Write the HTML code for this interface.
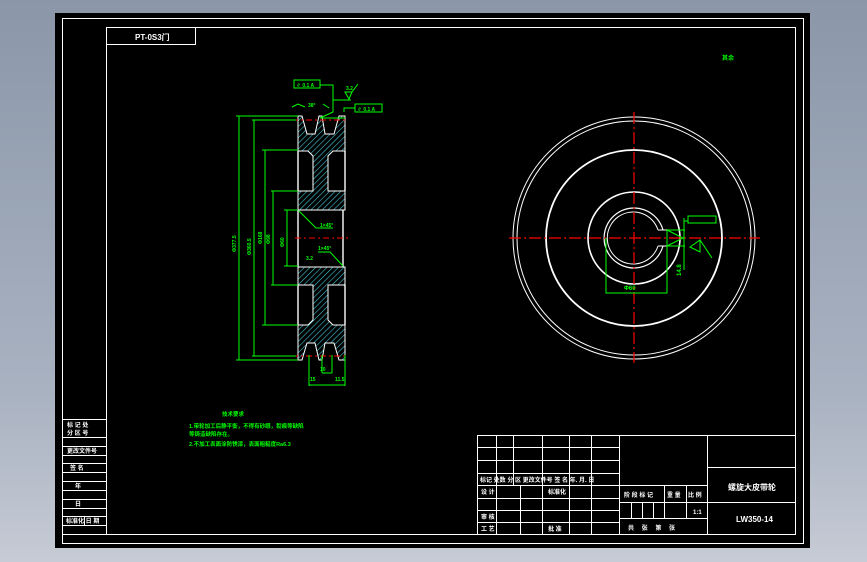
<!DOCTYPE html>
<html><head><meta charset="utf-8"><style>
html,body{margin:0;padding:0;width:867px;height:562px;overflow:hidden;background:linear-gradient(#8b97a9,#a9b2c1 70%,#c6cbd5);}
svg{position:absolute;left:0;top:0}
text{font-family:"Liberation Sans","Noto Sans CJK SC",sans-serif;font-weight:bold}
</style></head><body>
<svg width="867" height="562" viewBox="0 0 867 562">
<defs>
<pattern id="h" width="4" height="4" patternUnits="userSpaceOnUse" patternTransform="rotate(45)">
<rect width="4" height="4" fill="#000"/><line x1="0" y1="0" x2="0" y2="4" stroke="#46d0e0" stroke-width="1.1"/>
</pattern>
</defs>
<rect x="55" y="13" width="755" height="535" fill="#000"/>
<g fill="none" stroke="#fff" stroke-width="1">
<rect x="62.5" y="18.5" width="741" height="525"/>
<polyline points="106.5,534.5 106.5,27.5 795.5,27.5 795.5,534.5 62.5,534.5"/>
<rect x="106.5" y="27.5" width="89" height="17"/>
<line x1="62" y1="419.5" x2="106" y2="419.5"/>
<line x1="62" y1="437.5" x2="106" y2="437.5"/>
<line x1="62" y1="446.5" x2="106" y2="446.5"/>
<line x1="62" y1="455.5" x2="106" y2="455.5"/>
<line x1="62" y1="463.5" x2="106" y2="463.5"/>
<line x1="62" y1="472.5" x2="106" y2="472.5"/>
<line x1="62" y1="481.5" x2="106" y2="481.5"/>
<line x1="62" y1="490.5" x2="106" y2="490.5"/>
<line x1="62" y1="499.5" x2="106" y2="499.5"/>
<line x1="62" y1="508.5" x2="106" y2="508.5"/>
<line x1="62" y1="516.5" x2="106" y2="516.5"/>
<line x1="62" y1="525.5" x2="106" y2="525.5"/>
<line x1="84.5" y1="516" x2="84.5" y2="525"/>
<line x1="477.5" y1="435.5" x2="795" y2="435.5"/>
<line x1="477.5" y1="435" x2="477.5" y2="534"/>
<line x1="477" y1="447.5" x2="619" y2="447.5"/>
<line x1="477" y1="460.5" x2="619" y2="460.5"/>
<line x1="477" y1="473.5" x2="619" y2="473.5"/>
<line x1="477" y1="485.5" x2="707" y2="485.5"/>
<line x1="477" y1="498.5" x2="619" y2="498.5"/>
<line x1="477" y1="510.5" x2="619" y2="510.5"/>
<line x1="477" y1="522.5" x2="619" y2="522.5"/>
<line x1="619" y1="502.5" x2="707" y2="502.5"/>
<line x1="619" y1="518.5" x2="707" y2="518.5"/>
<line x1="707" y1="467.5" x2="795" y2="467.5"/>
<line x1="707" y1="502.5" x2="795" y2="502.5"/>
<line x1="496.5" y1="435" x2="496.5" y2="534"/>
<line x1="513.5" y1="435" x2="513.5" y2="485"/>
<line x1="520.5" y1="485" x2="520.5" y2="534"/>
<line x1="542.5" y1="435" x2="542.5" y2="534"/>
<line x1="569.5" y1="435" x2="569.5" y2="534"/>
<line x1="591.5" y1="435" x2="591.5" y2="534"/>
<line x1="619.5" y1="435" x2="619.5" y2="534"/>
<line x1="707.5" y1="435" x2="707.5" y2="534"/>
<line x1="631.5" y1="502" x2="631.5" y2="518"/>
<line x1="642.5" y1="502" x2="642.5" y2="518"/>
<line x1="653.5" y1="502" x2="653.5" y2="518"/>
<line x1="664.5" y1="485" x2="664.5" y2="518"/>
<line x1="686.5" y1="485" x2="686.5" y2="518"/>
</g>
<g fill="#fff" font-size="6">
<text x="135" y="40" font-size="8">PT-0S3门</text>
<text x="67" y="427">标 记 处</text><text x="67" y="435">分 区 号</text>
<text x="67" y="453">更改文件号</text>
<text x="70" y="470">签 名</text>
<text x="75" y="488">年</text>
<text x="75" y="506">日</text>
<text x="66" y="523">标准化 日 期</text>
<text x="480" y="482">标记 处数 分 区 更改文件号 签 名 年. 月. 日</text>
<text x="481" y="494">设 计</text><text x="548" y="494">标准化</text>
<text x="481" y="519">审 核</text>
<text x="481" y="531">工 艺</text><text x="548" y="531">批 准</text>
<text x="624" y="497">阶 段 标 记</text><text x="667" y="497">重 量</text><text x="688" y="497">比 例</text>
<text x="693" y="514">1:1</text>
<text x="628" y="530">共　 张　 第　 张</text>
<text x="728" y="490" font-size="8">螺旋大皮带轮</text>
<text x="736" y="522" font-size="8">LW350-14</text>
</g>
<g fill="none" stroke="#fff">
<circle cx="634" cy="238" r="121" stroke-width="1"/>
<circle cx="634" cy="238" r="117" stroke-width="1"/>
<circle cx="634" cy="238" r="88" stroke-width="1.8"/>
<circle cx="634" cy="238" r="46" stroke-width="1.6"/>
<path d="M663,230 A30,30 0 1 0 663,246" stroke-width="1.2"/>
<path d="M658,230 A26,26 0 1 0 658,246" stroke-width="1"/>
<line x1="658" y1="230" x2="667" y2="230"/><line x1="658" y1="246" x2="667" y2="246"/>
</g>
<g stroke="#f00" stroke-width="1.2" stroke-dasharray="12,3,2,3">
<line x1="509" y1="238" x2="760" y2="238"/>
<line x1="634" y1="112" x2="634" y2="363"/>
</g>
<g stroke="#0f0" fill="none" stroke-width="1">
<polyline points="606,238 606,293 667,293 667,229"/>
<line x1="667" y1="230" x2="685" y2="230"/>
<line x1="667" y1="246" x2="685" y2="246"/>
<line x1="684" y1="218" x2="684" y2="270"/>
<path d="M667,230 L683,238 L667,246"/>
<path d="M690,247 L700,240 L700,252 Z M700,240 L712,258"/>
<rect x="688" y="216" width="28" height="7"/>
<line x1="684" y1="221" x2="688" y2="221"/>
</g>
<g fill="#0f0" font-size="6">
<text x="624" y="290">Φ60</text>
<text x="681" y="276" transform="rotate(-90 681 276)">14.8</text>
<text x="722" y="60">其余</text>
</g>
<g>
<path fill="url(#h)" stroke="#fff" stroke-width="1" d="M298,116 L302,116 L307,134 L315,134 L319,116 L322,116 L325,134 L334,134 L339,116 L345,116 L345,151 L333,151 L328,156 L328,191 L345,191 L345,210 L298,210 L298,191 L313,191 L313,156 L308,151 L298,151 Z"/>
<path fill="url(#h)" stroke="#fff" stroke-width="1" d="M298,360 L302,360 L307,343 L315,343 L319,360 L322,360 L325,343 L334,343 L339,360 L345,360 L345,325 L333,325 L328,320 L328,285 L345,285 L345,267 L298,267 L298,285 L313,285 L313,320 L308,325 L298,325 Z"/>
<g fill="none" stroke="#fff" stroke-width="1.4">
<line x1="298" y1="151" x2="298" y2="191"/><line x1="345" y1="151" x2="345" y2="191"/>
<line x1="298" y1="285" x2="298" y2="325"/><line x1="345" y1="285" x2="345" y2="325"/>
<line x1="298" y1="210" x2="298" y2="267"/><line x1="343" y1="210" x2="343" y2="267"/>
</g>
</g>
<g stroke="#f00" stroke-width="1" stroke-dasharray="6,3,2,3">
<line x1="292" y1="120" x2="348" y2="120"/>
<line x1="292" y1="356" x2="348" y2="356"/>
<line x1="295" y1="238" x2="348" y2="238"/>
</g>
<g stroke="#0f0" fill="none" stroke-width="1">
<line x1="239" y1="116" x2="239" y2="360"/><line x1="236" y1="116" x2="298" y2="116"/><line x1="236" y1="360" x2="298" y2="360"/>
<line x1="254" y1="120" x2="254" y2="356"/><line x1="252" y1="120" x2="296" y2="120"/><line x1="252" y1="356" x2="296" y2="356"/>
<line x1="265" y1="150" x2="265" y2="325"/><line x1="262" y1="150" x2="298" y2="150"/><line x1="262" y1="325" x2="298" y2="325"/>
<line x1="273" y1="191" x2="273" y2="285"/><line x1="271" y1="191" x2="298" y2="191"/><line x1="271" y1="285" x2="298" y2="285"/>
<line x1="287" y1="210" x2="287" y2="266"/><line x1="284" y1="210" x2="298" y2="210"/><line x1="284" y1="266" x2="298" y2="266"/>
<path d="M299,211 L316,228 L333,228 M343,266 L330,252 L318,252"/>
<path d="M309,355 L309,386 M345,355 L345,386 M309,385 L345,385 M322,355 L322,373 M332,373 L322,373 M332,355 L332,373"/>
<rect x="294" y="80" width="26" height="8"/>
<path d="M320,85 L333,85 L333,100 L351,100 M333,100 L333,112 L320,118 L345,118"/>
<rect x="355" y="104" width="27" height="8"/>
<path d="M344,112 L344,108 L355,108"/>
<path d="M345,92 L352,92 L349,99 Z M352,92 L358,84"/>
<path d="M292,107 L298,104 L305,107 M323,104 L329,108"/>
</g>
<g fill="#0f0" font-size="5">
<text x="296" y="87">∥ 0.1 A</text><text x="357" y="111">∥ 0.1 A</text>
<text x="308" y="107">38°</text>
<text x="346" y="90">3.2</text>
<text x="320" y="227">1×45°</text><text x="318" y="250">1×45°</text>
<text x="310" y="381">15</text><text x="335" y="381">11.5</text><text x="320" y="371">10</text>
<text x="236" y="252" transform="rotate(-90 236 252)">Φ377.5</text>
<text x="251" y="255" transform="rotate(-90 251 255)">Φ360.5</text>
<text x="262" y="244" transform="rotate(-90 262 244)">Φ168</text>
<text x="270" y="244" transform="rotate(-90 270 244)">Φ98</text>
<text x="284" y="247" transform="rotate(-90 284 247)">Φ60</text>
<text x="306" y="260">3.2</text>
</g>
<g fill="#0f0" font-size="5.5">
<text x="222" y="416">技术要求</text>
<text x="189" y="428">1.带轮加工后静平衡，不得有砂眼，裂痕等缺陷</text>
<text x="189" y="436">等铸造缺陷存在。</text>
<text x="189" y="446">2.不加工表面涂防锈漆，表面粗糙度Ra6.3</text>
</g>
</svg>
</body></html>
